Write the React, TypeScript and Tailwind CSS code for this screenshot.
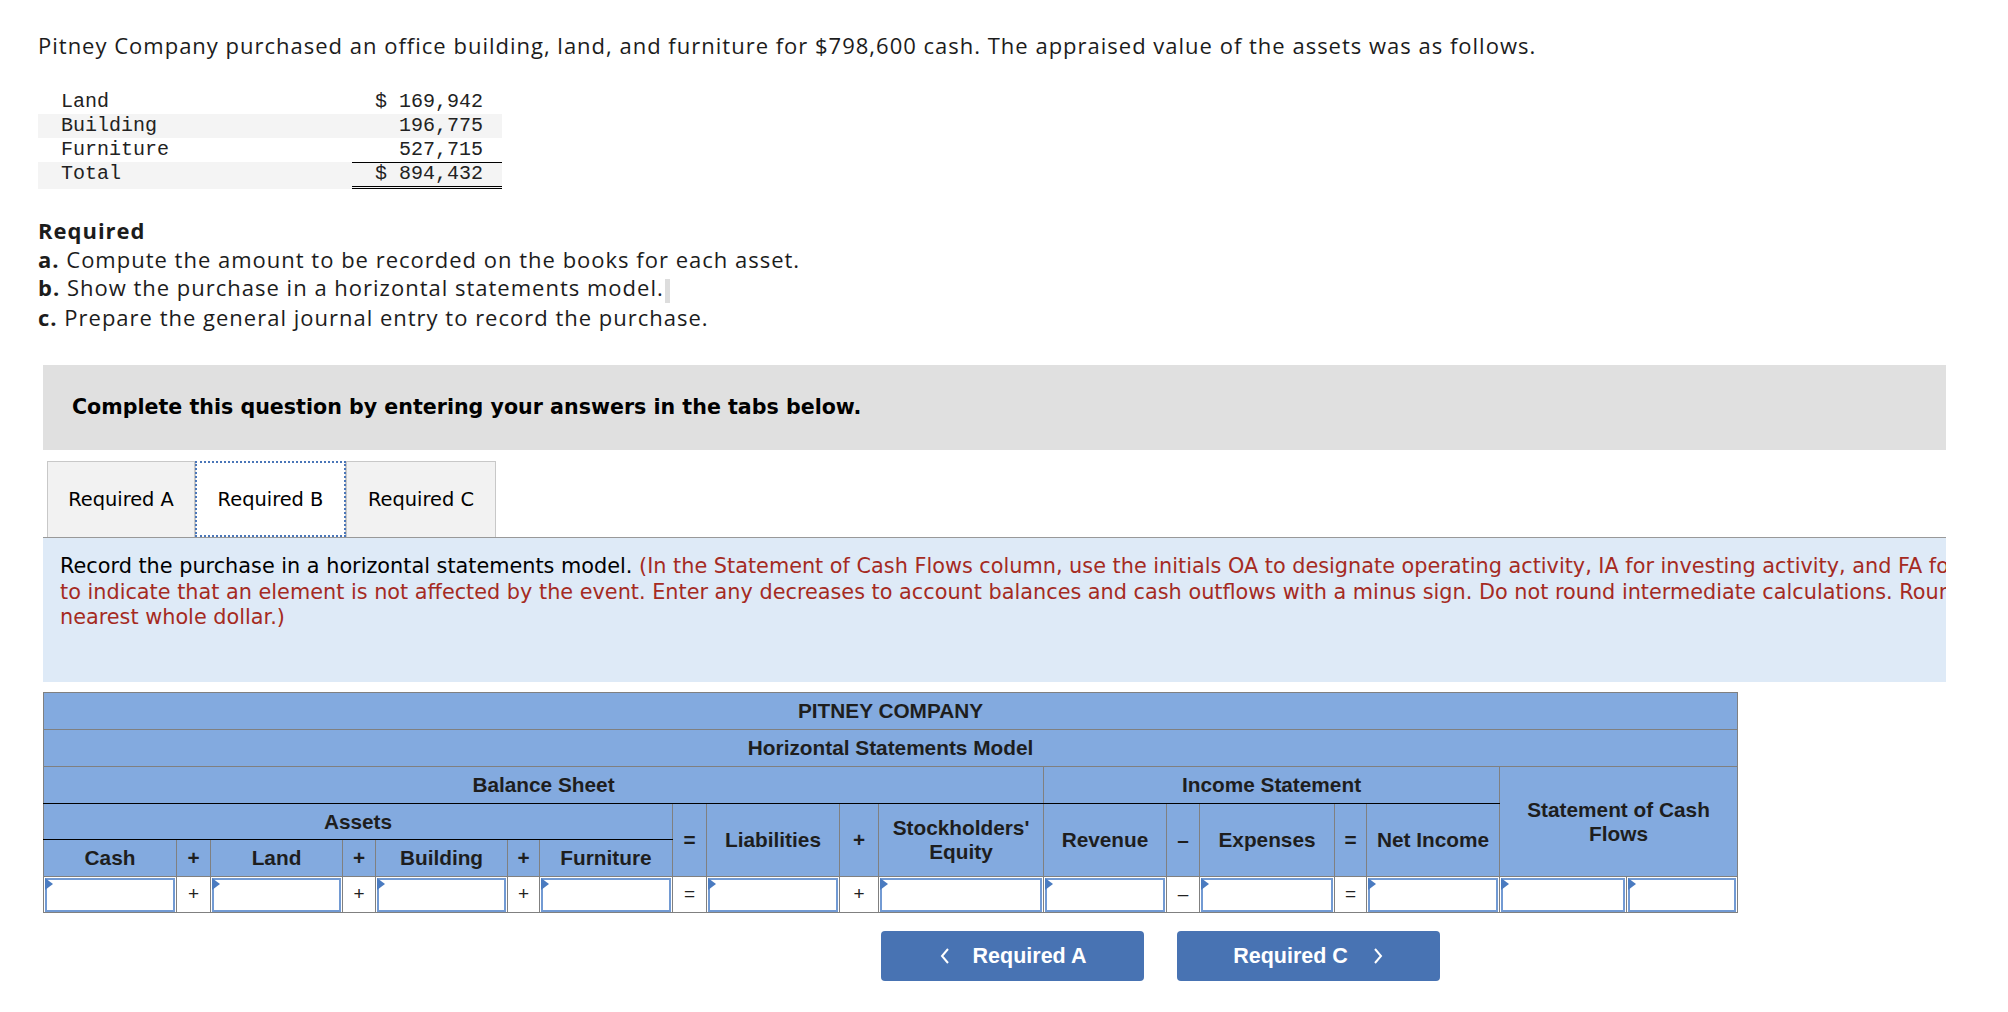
import React from "react";

const cols = [133, 34, 132, 33, 132, 32, 133, 34, 133, 39, 165, 123, 33, 135, 32, 133, 127, 111];
const colClass = [
  "w-[133px]", "w-[34px]", "w-[132px]", "w-[33px]", "w-[132px]", "w-[32px]", "w-[133px]", "w-[34px]",
  "w-[133px]", "w-[39px]", "w-[165px]", "w-[123px]", "w-[33px]", "w-[135px]", "w-[32px]", "w-[133px]",
  "w-[127px]", "w-[111px]",
];

const assets = [
  {label: "Land", value: "$ 169,942", shade: false},
  {label: "Building", value: "196,775", shade: true},
  {label: "Furniture", value: "527,715", shade: false},
];

const th = "bg-[#83aadf] border border-[#808080] text-center font-bold text-[20.8px] leading-[24px] text-[#1e1e1e] p-0";

const InputCell = () => (
  <td className="border border-[#808080] bg-white p-0 h-[36px]">
    <div className="relative h-[34px] mx-[1px] border-2 border-[#729ad3] bg-white">
      <span className="absolute left-[-2px] top-[-2px] w-0 h-0 border-y-[6px] border-y-transparent border-l-[8px] border-l-[#4a7bc0]"/>
    </div>
  </td>
);

const OpCell = ({sign}: { sign: string }) => (
  <td className="border border-[#808080] bg-white p-0 text-center text-[19px] text-[#222]">{sign}</td>
);

const Chevron = ({dir}: { dir: "left" | "right" }) => (
  <svg width="12" height="18" viewBox="0 0 12 18" className="shrink-0">
    <polyline
      points={dir === "left" ? "9,2 3,9 9,16" : "3,2 9,9 3,16"}
      fill="none"
      stroke="white"
      strokeWidth="2"
    />
  </svg>
);

export default function App() {
  return (
    <div className="w-[2008px] min-h-[1012px] bg-white text-[#1c1c1c]">
      <div className="pl-[38px] pt-[30px] font-['Open_Sans',sans-serif] text-[22px] tracking-[1px] leading-[30px]">
        Pitney Company purchased an office building, land, and furniture for $798,600 cash. The appraised value of the
        assets was as follows.
      </div>

      <div className="ml-[38px] mt-[30px] w-[464px] font-['Liberation_Mono',monospace] text-[20px] text-[#222]">
        {assets.map((a) => (
          <div key={a.label} className={`flex h-[24px] items-center ${a.shade ? "bg-[#f4f4f4]" : ""}`}>
            <span className="pl-[23px] flex-1">{a.label}</span>
            <span className="w-[150px] pr-[19px] text-right">{a.value}</span>
          </div>
        ))}
        <div className="flex h-[27px] bg-[#f4f4f4]">
          <span className="pl-[23px] flex-1 leading-[24px]">Total</span>
          <span className="w-[150px] pr-[19px] text-right leading-[22px] border-t border-black border-b-[3px] border-b-black border-double h-[27px]">
            $ 894,432
          </span>
        </div>
      </div>

      <div className="pl-[38px] mt-[27px] font-['Open_Sans',sans-serif] text-[22px] tracking-[1px] leading-[28.7px]">
        <div className="font-bold">Required</div>
        <div><b>a.</b> Compute the amount to be recorded on the books for each asset.</div>
        <div>
          <b>b.</b> Show the purchase in a horizontal statements model.
          <span className="inline-block w-[5px] h-[24px] bg-[#dddddd] align-middle ml-[1px]"/>
        </div>
        <div><b>c.</b> Prepare the general journal entry to record the purchase.</div>
      </div>

      <div className="ml-[43px] w-[1903px]">
        <div className="mt-[34px] h-[85px] bg-[#e0e0e0] flex items-center pl-[29px] font-['DejaVu_Sans',sans-serif] font-bold text-[20.6px] text-black">
          Complete this question by entering your answers in the tabs below.
        </div>

        <div className="mt-[11px] flex pl-[4px] h-[76px] font-['DejaVu_Sans',sans-serif] text-[19.4px] text-black">
          <div className="w-[148px] bg-[#f2f2f2] border border-[#c8c8c8] border-b-0 flex items-center justify-center">
            Required A
          </div>
          <div className="w-[151px] bg-white outline-2 outline-dotted outline-[#4a76b8] -outline-offset-2 border-x border-[#c8c8c8] flex items-center justify-center">
            Required B
          </div>
          <div className="w-[150px] bg-[#f2f2f2] border border-[#c8c8c8] border-b-0 flex items-center justify-center">
            Required C
          </div>
        </div>

        <div className="h-[145px] bg-[#deeaf7] border-t border-[#999999] overflow-hidden pl-[17px] pt-[16px] font-['DejaVu_Sans',sans-serif] text-[20.8px] leading-[25.6px]">
          <div className="whitespace-nowrap">
            <span className="text-black">Record the purchase in a horizontal statements model. </span>
            <span className="text-[#a52a22]">(In the Statement of Cash Flows column, use the initials OA to designate operating activity, IA for investing activity, and FA for financing activity. Use NA</span>
          </div>
          <div className="whitespace-nowrap text-[#a52a22]">
            to indicate that an element is not affected by the event. Enter any decreases to account balances and cash outflows with a minus sign. Do not round intermediate calculations. Round your final answers to the
          </div>
          <div className="whitespace-nowrap text-[#a52a22]">nearest whole dollar.)</div>
        </div>

        <table className="mt-[10px] table-fixed border-collapse w-[1694px] font-['Liberation_Sans',sans-serif]">
          <colgroup>
            {cols.map((_, i) => (
              <col key={i} className={colClass[i]}/>
            ))}
          </colgroup>
          <tbody>
            <tr className="h-[37px]">
              <th colSpan={18} className={th}>PITNEY COMPANY</th>
            </tr>
            <tr className="h-[37px]">
              <th colSpan={18} className={th}>Horizontal Statements Model</th>
            </tr>
            <tr className="h-[37px]">
              <th colSpan={11} className={`${th} border-b-black`}>Balance Sheet</th>
              <th colSpan={5} className={`${th} border-b-black`}>Income Statement</th>
              <th colSpan={2} rowSpan={3} className={`${th} px-[14px]`}>Statement of Cash Flows</th>
            </tr>
            <tr className="h-[36px]">
              <th colSpan={7} className={`${th} border-b-black`}>Assets</th>
              <th rowSpan={2} className={th}>=</th>
              <th rowSpan={2} className={th}>Liabilities</th>
              <th rowSpan={2} className={th}>+</th>
              <th rowSpan={2} className={th}>Stockholders'<br/>Equity</th>
              <th rowSpan={2} className={th}>Revenue</th>
              <th rowSpan={2} className={th}>–</th>
              <th rowSpan={2} className={th}>Expenses</th>
              <th rowSpan={2} className={th}>=</th>
              <th rowSpan={2} className={th}>Net Income</th>
            </tr>
            <tr className="h-[37px]">
              <th className={th}>Cash</th>
              <th className={th}>+</th>
              <th className={th}>Land</th>
              <th className={th}>+</th>
              <th className={th}>Building</th>
              <th className={th}>+</th>
              <th className={th}>Furniture</th>
            </tr>
            <tr className="h-[36px]">
              <InputCell/>
              <OpCell sign="+"/>
              <InputCell/>
              <OpCell sign="+"/>
              <InputCell/>
              <OpCell sign="+"/>
              <InputCell/>
              <OpCell sign="="/>
              <InputCell/>
              <OpCell sign="+"/>
              <InputCell/>
              <InputCell/>
              <OpCell sign="–"/>
              <InputCell/>
              <OpCell sign="="/>
              <InputCell/>
              <InputCell/>
              <InputCell/>
            </tr>
          </tbody>
        </table>

        <div className="mt-[18px] flex gap-[33px] pl-[838px] font-['Liberation_Sans',sans-serif] font-bold text-[21.5px] text-white">
          <button className="w-[263px] h-[50px] rounded-[4px] bg-[#4873b3] flex items-center justify-center">
            <span className="mr-[22px]"><Chevron dir="left"/></span>
            Required A
          </button>
          <button className="w-[263px] h-[50px] rounded-[4px] bg-[#4873b3] flex items-center justify-center">
            Required C
            <span className="ml-[24px]"><Chevron dir="right"/></span>
          </button>
        </div>
      </div>
    </div>
  );
}
